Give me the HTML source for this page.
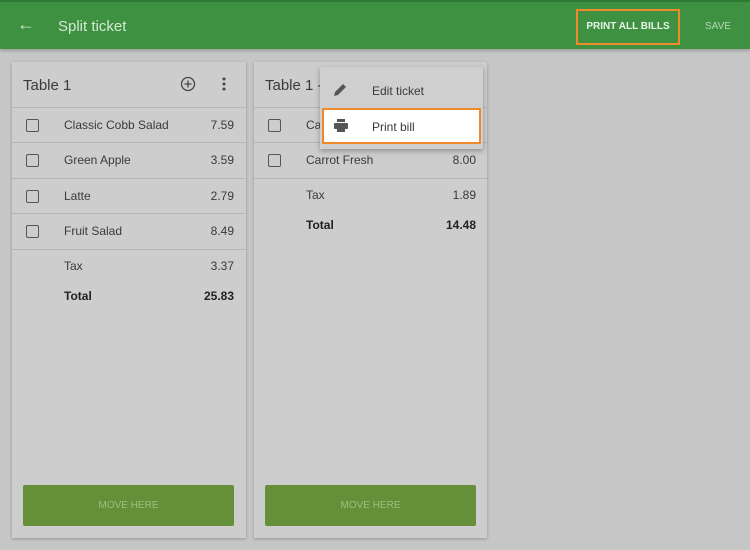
<!DOCTYPE html>
<html><head><style>
*{margin:0;padding:0;box-sizing:border-box}
body{width:750px;height:550px;background:#c6c6c6;font-family:"Liberation Sans",sans-serif;position:relative;overflow:hidden;color:#333}
.hdr{position:absolute;left:0;top:0;width:750px;height:49px;background:#3d9140;border-top:2px solid #2f7a33;box-shadow:0 2px 3px rgba(0,0,0,.2)}
.abs{position:absolute}
.card{position:absolute;top:62px;height:476px;background:#cdcdcd;box-shadow:0 1px 3px rgba(0,0,0,.25)}
.t{position:absolute;font-size:12px;color:#3a3a3a}
.cb{position:absolute;width:13px;height:13px;border:1.5px solid #555;border-radius:2px}
.line{position:absolute;height:1px;background:#b5b5b5}
.btn{position:absolute;background:#658f38;border-radius:2px;color:#9dc07c;font-size:10px;text-align:center;line-height:41px}
.r{text-align:right}
b{font-weight:bold;color:#222}
</style></head><body>
<div class="hdr">
 <div class="abs" style="left:17px;top:12px;color:#cfe3cf;font-size:18px">←</div>
 <div class="abs" style="left:58px;top:16px;color:#d5e8d5;font-size:15px">Split ticket</div>
 <div class="abs" style="left:576px;top:7px;width:104px;height:36px;border:2px solid #f0892a;color:#e8f3e8;font-size:10px;font-weight:bold;text-align:center;line-height:32px">PRINT ALL BILLS</div>
 <div class="abs" style="left:705px;top:19px;color:#b9d6b9;font-size:10px">SAVE</div>
</div>

<div class="card" style="left:12px;width:234px">
 <div class="t" style="left:11px;top:15px;font-size:15px">Table 1</div>
 <svg class="abs" style="left:168px;top:14px" width="16" height="16" viewBox="0 0 16 16"><circle cx="8" cy="8" r="6.5" fill="none" stroke="#444" stroke-width="1.3"/><path d="M8 4.5v7M4.5 8h7" stroke="#444" stroke-width="1.3"/></svg>
 <svg class="abs" style="left:209px;top:14px" width="6" height="16"><circle cx="3" cy="3" r="1.5" fill="#444"/><circle cx="3" cy="8" r="1.5" fill="#444"/><circle cx="3" cy="13" r="1.5" fill="#444"/></svg>
 <div class="line" style="left:0;top:45px;width:234px"></div>
 <div class="cb" style="left:14px;top:57px"></div><div class="t" style="left:52px;top:56px">Classic Cobb Salad</div><div class="t r" style="right:12px;top:56px">7.59</div>
 <div class="line" style="left:0;top:80px;width:234px"></div>
 <div class="cb" style="left:14px;top:92px"></div><div class="t" style="left:52px;top:91px">Green Apple</div><div class="t r" style="right:12px;top:91px">3.59</div>
 <div class="line" style="left:0;top:116px;width:234px"></div>
 <div class="cb" style="left:14px;top:128px"></div><div class="t" style="left:52px;top:127px">Latte</div><div class="t r" style="right:12px;top:127px">2.79</div>
 <div class="line" style="left:0;top:151px;width:234px"></div>
 <div class="cb" style="left:14px;top:163px"></div><div class="t" style="left:52px;top:162px">Fruit Salad</div><div class="t r" style="right:12px;top:162px">8.49</div>
 <div class="line" style="left:0;top:187px;width:234px"></div>
 <div class="t" style="left:52px;top:197px">Tax</div><div class="t r" style="right:12px;top:197px">3.37</div>
 <div class="t" style="left:52px;top:227px"><b>Total</b></div><div class="t r" style="right:12px;top:227px"><b>25.83</b></div>
 <div class="btn" style="left:11px;top:423px;width:211px;height:41px">MOVE HERE</div>
</div>

<div class="card" style="left:254px;width:233px">
 <div class="t" style="left:11px;top:15px;font-size:15px">Table 1 -</div>
 <div class="line" style="left:0;top:45px;width:233px"></div>
 <div class="cb" style="left:14px;top:57px"></div><div class="t" style="left:52px;top:56px">Ca</div>
 <div class="line" style="left:0;top:80px;width:233px"></div>
 <div class="cb" style="left:14px;top:92px"></div><div class="t" style="left:52px;top:91px">Carrot Fresh</div><div class="t r" style="right:11px;top:91px">8.00</div>
 <div class="line" style="left:0;top:116px;width:233px"></div>
 <div class="t" style="left:52px;top:126px">Tax</div><div class="t r" style="right:11px;top:126px">1.89</div>
 <div class="t" style="left:52px;top:156px"><b>Total</b></div><div class="t r" style="right:11px;top:156px"><b>14.48</b></div>
 <div class="btn" style="left:11px;top:423px;width:211px;height:41px">MOVE HERE</div>
</div>

<div class="abs" style="left:320px;top:67px;width:163px;height:82px;background:#cfcfcf;box-shadow:0 2px 5px rgba(0,0,0,.3)">
 <svg class="abs" style="left:12px;top:15px" width="16" height="16" viewBox="0 0 16 16"><path d="M2 14l1-4 8-8 3 3-8 8z" fill="#555"/></svg>
 <div class="t" style="left:52px;top:17px">Edit ticket</div>
 <div class="abs" style="left:2px;top:41px;width:159px;height:36px;background:#fff;border:2px solid #f0892a">
  <svg class="abs" style="left:9px;top:9px" width="16" height="14" viewBox="0 0 16 14"><rect x="4" y="0" width="8" height="3" fill="#555"/><rect x="1" y="4" width="14" height="6" rx="1" fill="#555"/><rect x="4" y="9" width="8" height="4" fill="#555"/></svg>
  <div class="t" style="left:48px;top:10px">Print bill</div>
 </div>
</div>
</body></html>
